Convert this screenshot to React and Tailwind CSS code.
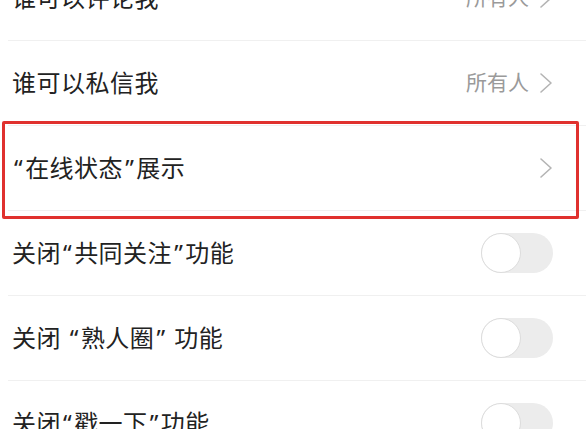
import React from 'react';

const rows = [
  { label: '谁可以评论我', value: '所有人', type: 'link' },
  { label: '谁可以私信我', value: '所有人', type: 'link' },
  { label: '“在线状态”展示', value: '', type: 'link', marked: true },
  { label: '关闭“共同关注”功能', type: 'toggle' },
  { label: '关闭 “熟人圈” 功能', type: 'toggle' },
  { label: '关闭“戳一下”功能', type: 'toggle' },
];

// quotes in the screenshot sit a little wider than the font's own glyphs
const Label = ({ text }) => (
  <span className="text-[24px] text-[#222222] tracking-[0.5px]">
    {text.split(/([“”])/).map((part, i) =>
      part === '“' || part === '”' ? (
        <span key={i} className="px-[2px]">{part}</span>
      ) : (
        <React.Fragment key={i}>{part}</React.Fragment>
      )
    )}
  </span>
);

const Chevron = () => (
  <svg width="14" height="22" viewBox="0 0 14 22" fill="none" className="ml-[10px]">
    <path d="M2 2 L12 11 L2 20" stroke="#b4b4b4" strokeWidth="1.6" strokeLinecap="round" strokeLinejoin="round" />
  </svg>
);

const Toggle = () => (
  <div className="w-[72px] h-[40px] rounded-full bg-[#ececec] flex items-center">
    <div className="w-[40px] h-[40px] rounded-full bg-white border border-[#dcdcdc]"></div>
  </div>
);

const App = () => {
  return (
    <div className="w-[586px] h-[429px] overflow-hidden bg-white" style={{ fontFamily: '"Noto Sans", "Noto Sans CJK SC", sans-serif' }}>
      <div className="-mt-[44px]">
        {rows.map((row, i) => (
          <div key={i} className="relative">
            <div className="h-[84px] flex items-center justify-between pl-[12px] pr-[33px]">
              <Label text={row.label} />
              {row.type === 'link' ? (
                <div className="flex items-center">
                  {row.value && <span className="text-[21px] text-[#9a9a9a]">{row.value}</span>}
                  <Chevron />
                </div>
              ) : (
                <Toggle />
              )}
            </div>
            <div className="h-px bg-[#f0f0f0] ml-[8px]"></div>
            {/* red annotation box */}
            {row.marked && (
              <div className="absolute left-[2px] right-[7px] -top-[5px] bottom-[-8px] border-[3px] border-[#e0312e] rounded-[2px]"></div>
            )}
          </div>
        ))}
      </div>
    </div>
  );
};

export default App;
